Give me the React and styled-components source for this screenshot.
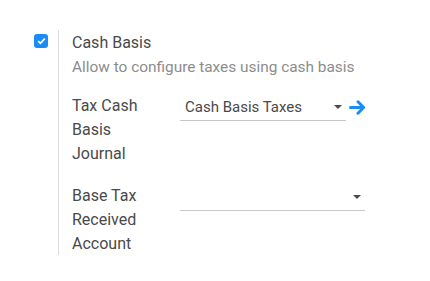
import styled, { createGlobalStyle } from "styled-components";

const Global = createGlobalStyle`
  body {
    margin: 0;
    background: #ffffff;
    font-family: Roboto, "Noto Sans", sans-serif;
  }
`;

const Setting = styled.div`
  display: flex;
  padding: 30px 0 0 34px;
`;

const CheckCol = styled.div`
  width: 24px;
  padding-top: 4px;
`;

const Check = styled.div`
  width: 14px;
  height: 14px;
  border-radius: 3px;
  background: #1a8cf5;
  display: flex;
  align-items: center;
  justify-content: center;
`;

const Body = styled.div`
  border-left: 1px solid #dcdde1;
  padding: 1px 0 0 13px;
  height: 224px;
`;

const Title = styled.div`
  font-size: 16px;
  line-height: 24px;
  color: #4a4a4a;
`;

const Help = styled.div`
  font-size: 15.4px;
  line-height: 24px;
  color: #8c8c8c;
`;

const Row = styled.div`
  display: grid;
  grid-template-columns: 108px auto;
  align-items: start;
  margin-top: ${({ $gap }) => $gap}px;
`;

const Label = styled.div`
  font-size: 16px;
  line-height: 24px;
  color: #4a4a4a;
`;

const FieldWrap = styled.div`
  display: flex;
  align-items: center;
  gap: 3px;
`;

const Select = styled.div`
  width: ${({ $w }) => $w}px;
  height: 27px;
  border-bottom: 1px solid #c8c8c8;
  display: flex;
  align-items: center;
  justify-content: space-between;
  box-sizing: border-box;
  padding: 0 4px 0 5px;
  font-size: 15px;
  color: #4a4a4a;
`;

const Caret = styled.span`
  width: 0;
  height: 0;
  border-left: 4px solid transparent;
  border-right: 4px solid transparent;
  border-top: 4px solid #4a4a4a;
`;

const Arrow = () => (
  <svg width="17" height="15" viewBox="0 0 17 15">
    <path
      d="M1.5 7.5h13M9 1.8l5.6 5.7L9 13.2"
      fill="none"
      stroke="#1a8cf5"
      strokeWidth="3"
      strokeLinecap="round"
      strokeLinejoin="round"
    />
  </svg>
);

export default function App() {
  return (
    <>
      <Global />
      <Setting>
        <CheckCol>
          <Check>
            <svg width="9" height="8" viewBox="0 0 9 8">
              <path d="M1.2 4.2l2.2 2.1L7.8 1.6" fill="none" stroke="#fff" strokeWidth="1.8" />
            </svg>
          </Check>
        </CheckCol>
        <Body>
          <Title>Cash Basis</Title>
          <Help>Allow to configure taxes using cash basis</Help>
          <Row $gap={15}>
            <Label>Tax Cash<br />Basis<br />Journal</Label>
            <FieldWrap>
              <Select $w={166}>
                <span>Cash Basis Taxes</span>
                <Caret />
              </Select>
              <Arrow />
            </FieldWrap>
          </Row>
          <Row $gap={18}>
            <Label>Base Tax<br />Received<br />Account</Label>
            <FieldWrap>
              <Select $w={185}>
                <span></span>
                <Caret />
              </Select>
            </FieldWrap>
          </Row>
        </Body>
      </Setting>
    </>
  );
}
